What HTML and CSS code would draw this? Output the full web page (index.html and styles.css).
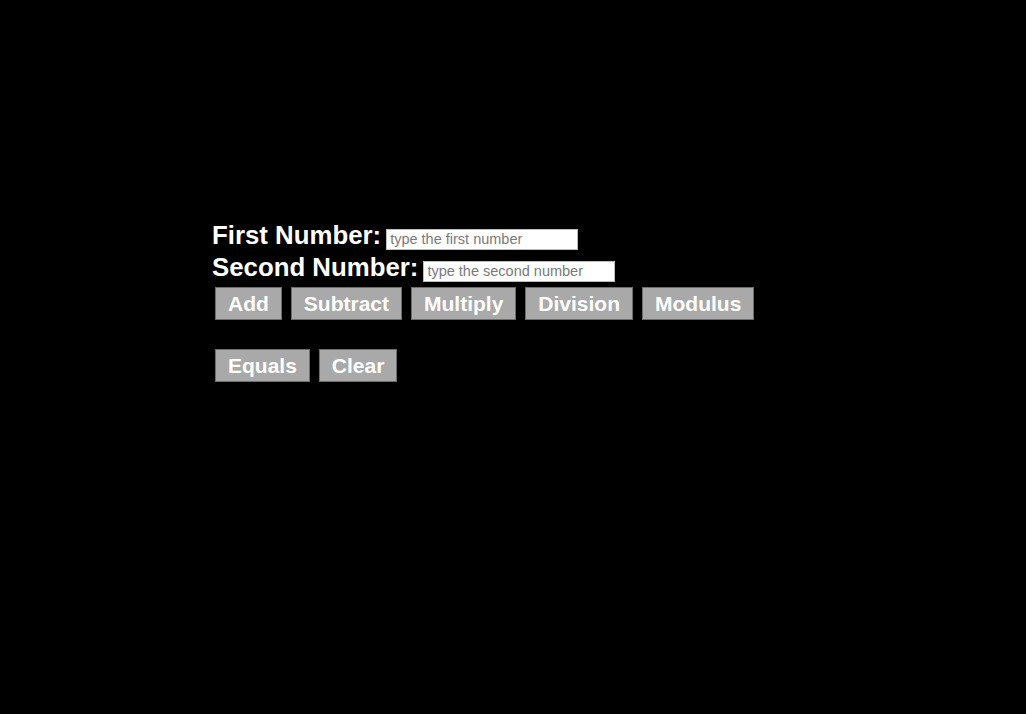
FILE: index.html
```html
<!DOCTYPE html>
<html lang="en">
  <head>
    <meta charset="UTF-8" />
    <meta name="viewport" content="width=device-width, initial-scale=1.0" />
    <title>Calculator</title>
    <link rel="stylesheet" href="styles.css">
  </head>
  <body>
    <div class="calc">
      <div class="calc__row">
        <label for="first-number" class="calc__label">First Number:</label>
        <input id="first-number" class="calc__input" type="text" placeholder="type the first number" />
      </div>
      <div class="calc__row">
        <label for="second-number" class="calc__label">Second Number:</label>
        <input id="second-number" class="calc__input" type="text" placeholder="type the second number" />
      </div>
      <div class="calc__ops">
        <button class="calc__btn" type="button">Add</button>
        <button class="calc__btn" type="button">Subtract</button>
        <button class="calc__btn" type="button">Multiply</button>
        <button class="calc__btn" type="button">Division</button>
        <button class="calc__btn" type="button">Modulus</button>
      </div>
      <div class="calc__ops calc__ops--bottom">
        <button class="calc__btn" type="button">Equals</button>
        <button class="calc__btn" type="button">Clear</button>
      </div>
    </div>
  </body>
</html>
```

FILE: styles.css
```css
body {
  margin: 0;
  background-color: #000000;
  font-family: "Liberation Sans", Arial, sans-serif;
}

* {
  box-sizing: border-box;
}

.calc {
  padding: 220px 0 0 212px;
}

.calc__row {
  display: flex;
  align-items: baseline;
  gap: 5px;
  height: 32px;
}

.calc__label {
  color: #ffffff;
  font-size: 25.8px;
  font-weight: bold;
  line-height: 30px;
}

.calc__input {
  width: 192px;
  height: 21px;
  padding: 0 3px;
  border: 1px solid #bdbdbd;
  background-color: #ffffff;
  font-family: "Liberation Sans", Arial, sans-serif;
  font-size: 14.5px;
  outline: none;
}

.calc__input::placeholder {
  color: #7a7a7a;
}

.calc__ops {
  display: flex;
  gap: 9px;
  margin: 3px 0 0 3px;
}

.calc__ops--bottom {
  margin-top: 29px;
}

.calc__btn {
  padding: 4px 12px;
  border: 1px solid #6e6e6e;
  background-color: #a9a9a9;
  color: #ffffff;
  font-family: "Liberation Sans", Arial, sans-serif;
  font-size: 21px;
  font-weight: bold;
  line-height: 23px;
  cursor: pointer;
}
```
